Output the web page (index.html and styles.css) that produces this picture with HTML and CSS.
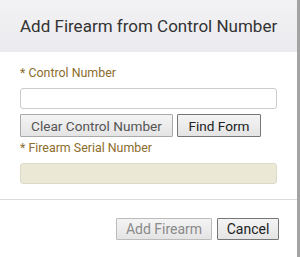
FILE: index.html
```html
<!DOCTYPE html>
<html lang="en">
  <head>
    <meta charset="UTF-8" />
    <title>Add Firearm from Control Number</title>
    <link rel="stylesheet" href="styles.css">
  </head>
  <body>
    <div class="dialog" role="dialog" aria-labelledby="dialog-title">
      <header class="dialog-header">
        <h1 id="dialog-title">Add Firearm from Control Number</h1>
      </header>

      <div class="dialog-body">
        <label class="field-label" for="controlNumber">* Control Number</label>
        <input type="text" id="controlNumber" class="text-input" />
        <div class="button-row">
          <button class="btn btn-clear">Clear Control Number</button>
          <button class="btn btn-find">Find Form</button>
        </div>

        <label class="field-label" for="serialNumber">* Firearm Serial Number</label>
        <input type="text" id="serialNumber" class="text-input readonly" readonly />
      </div>

      <footer class="dialog-footer">
        <button class="btn btn-add" disabled>Add Firearm</button>
        <button class="btn btn-cancel">Cancel</button>
      </footer>
    </div>
  </body>
</html>
```

FILE: styles.css
```css
* {
  margin: 0;
  padding: 0;
  box-sizing: border-box;
  font-family: Roboto, 'Liberation Sans', sans-serif;
}

body {
  background-color: #a3a3a3;
  height: 257px;
  overflow: hidden;
}

.dialog {
  width: 297px;
  height: 257px;
  background-color: #fff;
}

.dialog-header {
  height: 52px;
  display: flex;
  align-items: center;
  padding-left: 20px;
  background: linear-gradient(#f2f2f4, #ebebef);
}

.dialog-header h1 {
  font-size: 17px;
  font-weight: normal;
  color: #333;
}

.dialog-body {
  padding: 13px 20px 15px 20px;
  border-bottom: 1px solid #dcdcdc;
}

.field-label {
  display: block;
  font-size: 12.4px;
  line-height: 16px;
  color: #8c6d2c;
}

.text-input {
  display: block;
  width: 100%;
  height: 21px;
  margin-top: 7px;
  border: 1px solid #ccc;
  border-radius: 3px;
  background-color: #fff;
  outline: none;
}

.text-input.readonly {
  background-color: #ebe9d6;
  border-color: #dcdbcb;
}

.button-row {
  display: flex;
  gap: 4px;
  margin-top: 5px;
  margin-bottom: 3px;
}

.btn {
  height: 23px;
  padding: 0;
  font-size: 13.6px;
  white-space: nowrap;
  color: #222;
  background: linear-gradient(#f4f4f4, #e4e4e4);
  border: 1px solid #777;
  border-radius: 1px;
}

.btn-clear {
  width: 153px;
  color: #555;
  border-color: #aaa;
}

.btn-find {
  width: 84px;
}

.dialog-footer {
  display: flex;
  justify-content: flex-end;
  gap: 5px;
  padding: 18px 18px 0 0;
}

.dialog-footer .btn {
  height: 22px;
  font-size: 14px;
}

.btn-add {
  width: 96px;
  color: #8a8a8a;
  border-color: #bbb;
}

.btn-cancel {
  width: 62px;
}
```
